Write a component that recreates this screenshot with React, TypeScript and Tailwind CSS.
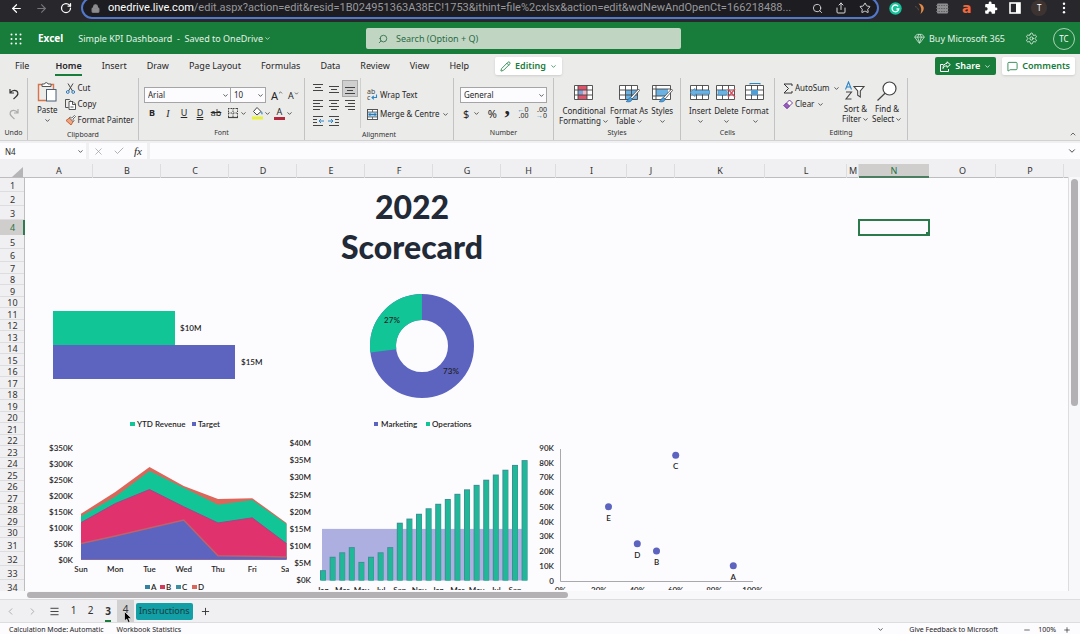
import type { ReactNode } from 'react';
import {
  ArrowLeft,
  ArrowRight,
  ChevronDown,
  ChevronLeft,
  ChevronRight,
  ChevronUp,
  Check,
  Gem,
  Lock,
  Menu,
  MessageSquare,
  Minus,
  Pencil,
  Plus,
  RotateCw,
  Search,
  Settings,
  Share,
  Star,
  X,
} from 'lucide-react';
import { MdExtension } from 'react-icons/md';

const PURPLE = '#5c64c0';
const GREEN = '#12c597';

const columns = [
  { name: 'A', width: 68 },
  { name: 'B', width: 68 },
  { name: 'C', width: 68 },
  { name: 'D', width: 68 },
  { name: 'E', width: 68 },
  { name: 'F', width: 68 },
  { name: 'G', width: 68 },
  { name: 'H', width: 55 },
  { name: 'I', width: 71 },
  { name: 'J', width: 48 },
  { name: 'K', width: 90 },
  { name: 'L', width: 82 },
  { name: 'M', width: 12 },
  { name: 'N', width: 70 },
  { name: 'O', width: 67 },
  { name: 'P', width: 68 },
];

const rows = Array.from({ length: 34 }, (_, i) => {
  const n = i + 1;
  if (n === 4) return { n, height: 15 };
  if (n === 6) return { n, height: 13 };
  if (n >= 7 && n <= 30) return { n, height: n % 2 ? 12 : 11 };
  return { n, height: 14 };
});

const menuTabs = ['File', 'Home', 'Insert', 'Draw', 'Page Layout', 'Formulas', 'Data', 'Review', 'View', 'Help'];

const menuTabStyle = (tab: string) => {
  if (tab === 'Home') return 'border-b-2 border-[#187c3b] pt-[2px] font-semibold';
  if (tab === 'File') return 'pr-[6px]';
  return '';
};

function Chev({ className = '' }: { className?: string }) {
  return <ChevronDown size={7} strokeWidth={2.5} className={`shrink-0 ${className}`} />;
}

/* ---------- browser bar ---------- */

function BrowserBar() {
  return (
    <div className="h-[22px] shrink-0 overflow-hidden bg-[#28282c] text-[#d8d8da]">
      <div className="-mt-[3px] flex h-[22px] items-center">
        <div className="flex w-[81px] shrink-0 items-center gap-3 pl-[10px]">
          <button aria-label="Back"><ArrowLeft size={13} strokeWidth={2.2} className="text-white" /></button>
          <button aria-label="Forward"><ArrowRight size={13} strokeWidth={2} className="text-[#77777b]" /></button>
          <button aria-label="Reload"><RotateCw size={12} strokeWidth={2.5} className="text-white" /></button>
        </div>
        <div className="flex h-[22px] min-w-0 flex-1 items-center rounded-full border-2 border-[#5278cc] bg-[#1d1d21] pr-[6px] pl-2">
          <Lock size={9} strokeWidth={3} className="shrink-0 fill-[#8d8d91] text-[#8d8d91]" />
          <span className="ml-2 min-w-0 flex-1 truncate font-['Roboto','Liberation_Sans',sans-serif] text-[11px] text-[#98989c]">
            <span className="text-white">onedrive.live.com</span>
            /edit.aspx?action=edit&amp;resid=1B024951363A38EC!1753&amp;ithint=file%2cxlsx&amp;action=edit&amp;wdNewAndOpenCt=166218488...
          </span>
          <div className="flex shrink-0 items-center gap-3 pl-2">
            <button aria-label="Zoom"><Search size={11} /></button>
            <button aria-label="Share page"><Share size={12} /></button>
            <button aria-label="Bookmark"><Star size={12} /></button>
          </div>
        </div>
        <div className="flex w-[201px] shrink-0 items-center justify-between pr-[10px] pl-[10px]">
          <svg width="13" height="13" viewBox="0 0 13 13">
            <circle cx="6.5" cy="6.5" r="6.2" fill="#15c39a" />
            <path d="M9.2 4.4A3.4 3.4 0 1 0 9.8 7H7.4" fill="none" stroke="#fff" strokeWidth="1.3" />
          </svg>
          <svg width="13" height="13" viewBox="0 0 13 13">
            <path d="M5.500 1.500c5.500.6 7.500 6 2 10.500C9 8 8.500 4.500 5.500 1.500Z" fill="#e58a45" />
            <path d="M2 4.500c2 .5 3.200 1.800 3.600 3.800" fill="none" stroke="#5a4a42" />
          </svg>
          <svg width="13" height="13" viewBox="0 0 13 13">
            <rect x="1" y="1.500" width="11" height="10" rx="1" fill="#8f8f92" />
            <path d="M0 3.500h13M0 6.500h13M0 9.500h13" stroke="#636367" strokeDasharray="1.500 1" />
          </svg>
          <span className="flex h-[13px] w-[13px] items-center justify-center font-['DejaVu_Sans',sans-serif] text-[14px] leading-none font-bold text-[#f2683c]">a</span>
          <MdExtension size={14} className="text-white" />
          <svg width="12" height="12" viewBox="0 0 12 12">
            <rect x="1" y="1" width="10" height="10" fill="none" stroke="#fff" strokeWidth="1.600" />
            <path d="M7 1h4v10H7z" fill="#fff" />
          </svg>
          <span className="flex h-4 w-4 items-center justify-center rounded-full bg-[#3d3432] text-[8px] text-white">T</span>
          <svg width="12" height="12" viewBox="0 0 12 12" fill="#fff">
            <circle cx="6" cy="1.800" r="1.200" />
            <circle cx="6" cy="6" r="1.200" />
            <circle cx="6" cy="10.200" r="1.200" />
          </svg>
        </div>
      </div>
    </div>
  );
}

/* ---------- green title bar ---------- */

function TitleBar() {
  return (
    <header className="grid h-8 shrink-0 grid-cols-[366fr_315fr_399fr] items-center bg-[#187c3b] pt-px text-[9px] text-[#e4f3e8]">
      <div className="flex items-center pl-[10px] whitespace-nowrap">
        <button aria-label="App launcher">
          <svg width="12" height="12" viewBox="0 0 12 12" fill="#fff">
            {[1.5, 6, 10.5].map((y) =>
              [1.5, 6, 10.5].map((x) => <circle key={`${x}-${y}`} cx={x} cy={y} r="1" />)
            )}
          </svg>
        </button>
        <span className="ml-4 text-[10px] font-bold text-white">Excel</span>
        <button className="ml-[15px] flex items-center">
          Simple KPI Dashboard&nbsp; -&nbsp; Saved to OneDrive
          <Chev className="ml-px" />
        </button>
      </div>
      <label className="flex h-[21px] items-center gap-2 rounded-[2px] bg-[#c0d6c3] px-3 text-[#2a6b45]">
        <Search size={10} className="-scale-x-100" />
        <input
          aria-label="Search"
          placeholder="Search (Option + Q)"
          className="min-w-0 flex-1 bg-transparent outline-none placeholder:text-[#2a6b45]"
        />
      </label>
      <div className="flex items-center justify-end pr-[5px]">
        <button className="flex items-center gap-1">
          <Gem size={11} strokeWidth={1.600} />
          Buy Microsoft 365
        </button>
        <button aria-label="Settings" className="ml-5"><Settings size={13} strokeWidth={1.600} /></button>
        <button className="ml-[15px] flex h-[22px] w-[22px] items-center justify-center rounded-full border border-[#a9d3b5] text-[8px] text-white">TC</button>
      </div>
    </header>
  );
}

function MenuRow() {
  return (
    <div className="flex h-6 shrink-0 items-center bg-[#ebebea] pr-[5px] pl-[15px] text-[9px]">
      <nav className="flex items-center gap-5">
        {menuTabs.map((tab) => (
          <button key={tab} className={`leading-[16px] whitespace-nowrap ${menuTabStyle(tab)}`}>
            {tab}
          </button>
        ))}
      </nav>
      <button className="ml-[26px] flex h-[18px] items-center gap-1 rounded-[2px] bg-white px-[5px] font-semibold text-[#187c3b] shadow-sm">
        <Pencil size={11} strokeWidth={1.800} />
        Editing
        <Chev />
      </button>
      <div className="ml-auto flex gap-[6px] font-semibold">
        <button className="flex h-[18px] items-center gap-1 rounded-[2px] bg-[#187c3b] px-[5px] text-white">
          <svg width="11" height="11" viewBox="0 0 11 11" fill="none" stroke="currentColor">
            <path d="M3.500 3.500h-3v7h8V8" />
            <path d="M7 .8 10.300 3.600 7 6.400V4.800C5 4.800 3.800 5.600 3 7.500 3 4.800 4.300 2.600 7 2.400Z" />
          </svg>
          Share
          <Chev />
        </button>
        <button className="flex h-[18px] items-center gap-1 rounded-[2px] bg-white px-[5px] text-[#187c3b] shadow-sm">
          <MessageSquare size={11} strokeWidth={1.800} />
          Comments
        </button>
      </div>
    </div>
  );
}

/* ---------- ribbon icons ---------- */

function PasteIcon() {
  return (
    <svg width="20" height="21" viewBox="0 0 20 21" fill="none">
      <path d="M5 3.500H1.500v16H9M14 3.500h2.500V8" stroke="#d9734a" strokeWidth="1.400" />
      <path d="M5 5.500V3h2.500a1.800 1.800 0 0 1 3.500 0H14v2.500Z" fill="#fff" stroke="#555" />
      <rect x="9.500" y="8.500" width="9.500" height="11.500" fill="#fff" stroke="#4a5e78" />
    </svg>
  );
}

function CutIcon() {
  return (
    <svg width="11" height="11" viewBox="0 0 11 11" fill="none">
      <path d="m3 .5 4.500 7.500M8 .5 3.500 8" stroke="#444" />
      <circle cx="2.800" cy="9" r="1.400" stroke="#2e7ab8" />
      <circle cx="8.200" cy="9" r="1.400" stroke="#2e7ab8" />
    </svg>
  );
}

function CopyIcon() {
  return (
    <svg width="11" height="11" viewBox="0 0 11 11" fill="none" stroke="#444" strokeWidth=".9">
      <path d="M3.500 8.500H.5v-8h4l1 1" />
      <path d="M4 2.500h4l2.500 2.500v5.500H4ZM7.500 2.500v3h3" fill="#fff" />
      <path d="M5.500 8h3" />
    </svg>
  );
}

function PainterIcon() {
  return (
    <svg width="11" height="11" viewBox="0 0 11 11" fill="none">
      <path d="M5 2.500 8.500 6 6 10 1 5.500Z" fill="#f3a37d" stroke="#c05a2c" strokeWidth=".9" />
      <path d="M4.500 3 8 6.500 9 5.500 7.800 4.200 10.500 1.500 9.500.5 6.800 3 5.500 2Z" fill="#fff" stroke="#444" strokeWidth=".8" />
    </svg>
  );
}

// three horizontal strokes; each entry is [x1, x2] on a 12px wide icon
function Lines({ spans, top = 2 }: { spans: number[][]; top?: number }) {
  return (
    <svg width="12" height="12" viewBox="0 0 12 12" stroke="#444" strokeWidth="1">
      {spans.map(([a, b], i) => (
        <path key={i} d={`M${a} ${top + i * 3 - 0.5}H${b}`} />
      ))}
    </svg>
  );
}

function IndentIcon({ right = false }: { right?: boolean }) {
  return (
    <svg width="12" height="12" viewBox="0 0 12 12" fill="none" stroke="#444">
      <path d={right ? 'M1 1.500h10M7 4.500h4M7 7.500h4M1 10.500h10' : 'M1 1.500h10M1 4.500h4M1 7.500h4M1 10.500h10'} />
      <path d={right ? 'M0 6h5M3 4l2 2-2 2' : 'M12 6H7M9 4 7 6l2 2'} stroke="#2b86c8" />
    </svg>
  );
}

function WrapIcon() {
  return (
    <svg width="11" height="12" viewBox="0 0 11 12" fill="none" className="overflow-visible">
      <text x="0" y="5" fontSize="7" fill="#444">ab</text>
      <text x="0" y="11" fontSize="7" fill="#444">c</text>
      <path d="M9.500 5.500v3H5M6.800 6.800 5 8.500l1.800 1.800" stroke="#2b86c8" strokeWidth="1.100" />
    </svg>
  );
}

function MergeIcon() {
  return (
    <svg width="11" height="11" viewBox="0 0 11 11" fill="none">
      <rect x=".5" y=".5" width="10" height="10" fill="#fff" stroke="#555" />
      <rect x="1" y="3" width="9" height="5" fill="#a6d3ee" />
      <path d="M.5 3h10M.5 8h10M5.500.5V3M5.500 8v2.500" stroke="#555" strokeWidth=".8" />
      <path d="M2 5.500h7M3.500 4 2 5.500 3.500 7M7.500 4 9 5.500 7.500 7" stroke="#1f6fae" strokeWidth=".9" />
    </svg>
  );
}

function SheetGrid({ children }: { children: ReactNode }) {
  return (
    <svg width="22" height="20" viewBox="0 0 22 20" fill="none">
      <path d="M1.500 2.500h18v14h-18Z" fill="#fff" />
      {children}
    </svg>
  );
}

const gridStroke = 'M1.500 2.500h18v14h-18ZM1.500 7h18M1.500 12h18M7.500 2.500v14M13.500 2.500v14';

function ConditionalIcon() {
  return (
    <SheetGrid>
      <path d="M5 3h9v4H5zM5 12h9v4H5z" fill="#e0526a" />
      <path d="M5 7h5v5H5z" fill="#7fa4d8" />
      <path d="M10 7h4v5h-4z" fill="#f4b5c0" />
      <path d="M1.500 2.500h18v14h-18ZM1.500 7h18M1.500 12h18M5 2.500v14M14 2.500v14" stroke="#444" strokeWidth=".9" />
    </SheetGrid>
  );
}

function BrushStroke() {
  return (
    <>
      <path d="m20.500 6-8 8.500 1.500 1.500 7.500-8.500Z" fill="#fff" stroke="#444" strokeWidth=".8" />
      <path d="M12.500 14.300c-2 .2-2.200 3.700-4.500 4.200 3 1 6 .2 6.200-2.600Z" fill="#4f9ed6" stroke="#2c6fa8" strokeWidth=".7" />
    </>
  );
}

function FormatTableIcon() {
  return (
    <SheetGrid>
      <path d="M7.500 7h12v9.500h-12z" fill="#6bb2e2" />
      <path d={gridStroke} stroke="#444" strokeWidth=".9" />
      <BrushStroke />
    </SheetGrid>
  );
}

function StylesIcon() {
  return (
    <SheetGrid>
      <path d="M5 6h12v7H5z" fill="#6bb2e2" />
      <path d="M1.500 2.500h18v14h-18ZM1.500 6h18M5 2.500v14M1.500 13h15" stroke="#444" strokeWidth=".9" />
      <BrushStroke />
    </SheetGrid>
  );
}

function InsertCellsIcon() {
  return (
    <SheetGrid>
      <path d={gridStroke} stroke="#444" strokeWidth=".9" />
      <path d="M6 5.500 1 9.500l5 4v-2.300h14.500V7.500H6Z" fill="#6bb2e2" stroke="#3a88bd" strokeWidth=".7" />
    </SheetGrid>
  );
}

function DeleteCellsIcon() {
  return (
    <SheetGrid>
      <path d={gridStroke} stroke="#444" strokeWidth=".9" />
      <path d="M3 7.500h8l2 2-2 2.500H3Z" fill="#6bb2e2" stroke="#3a88bd" strokeWidth=".7" />
      <path d="m13 6 7 8M20 6l-7 8" stroke="#d9485a" strokeWidth="1.200" />
    </SheetGrid>
  );
}

function FormatCellsIcon() {
  return (
    <SheetGrid>
      <path d={gridStroke} stroke="#444" strokeWidth=".9" />
      <path d="M7 7h7v5H7z" fill="#4f9ed6" />
      <path d="M6 .5h10M6 0v1.500M16 0v1.500" stroke="#2b86c8" />
    </SheetGrid>
  );
}

function SortIcon() {
  return (
    <svg width="22" height="20" viewBox="0 0 22 20" fill="none">
      <path d="M1.500 8.500 4.500 1l3 7.500M2.600 6h3.800" stroke="#2b86c8" strokeWidth="1.100" />
      <path d="M2 11h5.500L2 18h5.500" stroke="#444" strokeWidth="1.100" />
      <path d="M10 5.500h10l-3.700 4.500v6l-2.600-1.800V10Z" fill="#fff" stroke="#444" strokeWidth="1.100" />
    </svg>
  );
}

function FindIcon() {
  return (
    <svg width="22" height="20" viewBox="0 0 22 20" fill="none" stroke="#444" strokeWidth="1.200">
      <circle cx="13.500" cy="7.500" r="6.500" fill="#fff" />
      <path d="M9 12.300 1.500 19.500" />
    </svg>
  );
}

function FillIcon() {
  return (
    <svg width="12" height="14" viewBox="0 0 12 14" fill="none">
      <path d="M5 1.500 9 5.500 5 9 1.500 5.500Z" fill="#fff" stroke="#444" />
      <path d="M9.500 5c1.500 1.500 1.200 3.500.5 3.500S9 7 9.500 5Z" fill="#2b86c8" />
      <path d="M0 10.500h11v3H0z" fill="#e6f23a" />
    </svg>
  );
}

/* ---------- ribbon ---------- */

function Group({ label, className, children }: { label: string; className: string; children: ReactNode }) {
  return (
    <section className={`flex shrink-0 flex-col border-r border-[#c4c3c3] ${className}`}>
      <div className="flex h-[50px]">{children}</div>
      <div className="text-center text-[7px] leading-[14px] text-[#333]">{label}</div>
    </section>
  );
}

function BigButton({ icon, lines, className = '' }: { icon: ReactNode; lines: string[]; className?: string }) {
  return (
    <button className={`flex flex-col items-center text-[8px] leading-[10px] whitespace-nowrap ${className}`}>
      <span className="mb-[3px]">{icon}</span>
      <span>{lines[0]}</span>
      <span className="flex h-[10px] items-center">
        {lines[1]}
        <Chev className={lines[1] ? 'ml-px' : ''} />
      </span>
    </button>
  );
}

function Picker({ label, value, className }: { label: string; value: string; className: string }) {
  return (
    <div className={`relative ${className}`}>
      <select aria-label={label} className="h-4 w-full appearance-none border border-[#a5a4a6] bg-[#fcfbfe] pl-[3px] text-[8px] leading-none outline-none">
        <option>{value}</option>
      </select>
      <Chev className="pointer-events-none absolute top-[5px] right-[2px]" />
    </div>
  );
}

function Ribbon() {
  return (
    <div className="flex h-[63px] shrink-0 overflow-hidden border-b border-[#d3d2d3] bg-[#ebebea] text-[8px] text-[#262626]">
      <Group label="Undo" className="w-7">
        <div className="flex flex-1 flex-col items-center gap-2 pt-[10px]">
          <button aria-label="Undo">
            <svg width="12" height="12" viewBox="0 0 12 12" fill="none" stroke="#333" strokeWidth="1.200">
              <path d="M2 1v4h4M2.200 4.800C4.500 1.500 9 1.800 9.800 4.800c.6 2.200-1 3.500-4.300 6.200" />
            </svg>
          </button>
          <button aria-label="Redo">
            <svg width="12" height="12" viewBox="0 0 12 12" fill="none" stroke="#aaa" strokeWidth="1.200">
              <path d="M10 1v4H6M9.800 4.800C7.500 1.500 3 1.800 2.200 4.800c-.6 2.200 1 3.500 4.300 6.200" />
            </svg>
          </button>
        </div>
      </Group>

      <Group label="Clipboard" className="w-[111px]">
        <BigButton icon={<PasteIcon />} lines={['Paste']} className="ml-[9px] pt-[3px]" />
        <div className="ml-[7px] flex flex-col pt-[2px] leading-[16px]">
          <button className="flex items-center gap-[2px]"><CutIcon />Cut</button>
          <button className="flex items-center gap-[2px]"><CopyIcon />Copy</button>
          <button className="flex items-center gap-[2px] whitespace-nowrap"><PainterIcon />Format Painter</button>
        </div>
      </Group>

      <Group label="Font" className="w-[166px]">
        <div className="flex flex-1 flex-col pt-[9px] pl-[5px]">
          <div className="flex items-center">
            <Picker label="Font" value="Arial" className="w-[87px]" />
            <Picker label="Font size" value="10" className="-ml-px w-9" />
            <button aria-label="Increase font size" className="ml-[5px] flex items-start text-[11px] leading-none">
              A<ChevronUp size={5} strokeWidth={3} />
            </button>
            <button aria-label="Decrease font size" className="ml-[5px] flex items-start text-[9px] leading-none">
              A<ChevronDown size={5} strokeWidth={3} />
            </button>
          </div>
          <div className="mt-[3px] flex h-[14px] items-center text-[9px]">
            <button aria-label="Bold" className="w-4 font-bold">B</button>
            <button aria-label="Italic" className="w-4 font-['Liberation_Serif',serif] text-[10px] italic">I</button>
            <button aria-label="Underline" className="w-4 underline">U</button>
            <button aria-label="Double underline" className="w-4 underline decoration-double">D</button>
            <button aria-label="Strikethrough" className="w-4 line-through">ab</button>
            <button aria-label="Borders" className="ml-[3px] flex items-center">
              <svg width="12" height="12" viewBox="0 0 12 12" fill="none" stroke="#444">
                <path d="M1 1.500h10M1.500 1v10M10.500 1v10M6 1v10M1 6h10" strokeDasharray="1.500 1" />
                <path d="M1 10.500h10" strokeWidth="1.200" />
              </svg>
              <Chev className="ml-px" />
            </button>
            <button aria-label="Fill colour" className="ml-[5px] flex items-center">
              <FillIcon />
              <Chev />
            </button>
            <button aria-label="Font colour" className="ml-[3px] flex items-center">
              <span className="flex h-[13px] w-[11px] items-center justify-center border-b-[3px] border-[#b3283c] leading-none">A</span>
              <Chev className="ml-px" />
            </button>
          </div>
        </div>
      </Group>

      <Group label="Alignment" className="w-[149px]">
        <div className="ml-[5px] grid grid-cols-3 content-start border-r border-[#d0cfd0] pt-[2px] pr-[2px]">
          <span className="flex h-[17px] w-4 items-center justify-center"><Lines spans={[[1, 11], [3, 9], [1, 11]]} /></span>
          <span className="flex h-[17px] w-4 items-center justify-center"><Lines spans={[[1, 11], [3, 9], [1, 11]]} top={4} /></span>
          <span className="flex h-[17px] w-4 items-center justify-center border border-[#a9a8a9] bg-[#d0cfcf]"><Lines spans={[[1, 11], [3, 9], [1, 11]]} top={5} /></span>
          <span className="flex h-4 w-4 items-center justify-center"><Lines spans={[[1, 11], [1, 8], [1, 11], [1, 8]]} /></span>
          <span className="flex h-4 w-4 items-center justify-center"><Lines spans={[[1, 11], [3, 9], [1, 11], [3, 9]]} /></span>
          <span className="flex h-4 w-4 items-center justify-center"><Lines spans={[[1, 11], [4, 11], [1, 11], [4, 11]]} /></span>
          <span className="flex h-4 w-4 items-center justify-center"><IndentIcon /></span>
          <span className="flex h-4 w-4 items-center justify-center"><IndentIcon right /></span>
        </div>
        <div className="ml-[6px] flex flex-col gap-[7px] pt-[11px]">
          <button className="flex items-center gap-[2px] leading-[12px]"><WrapIcon />Wrap Text</button>
          <button className="flex items-center gap-[2px] leading-[12px] whitespace-nowrap"><MergeIcon />Merge &amp; Centre<Chev /></button>
        </div>
      </Group>

      <Group label="Number" className="w-[100px]">
        <div className="flex flex-1 flex-col px-[6px] pt-[9px]">
          <Picker label="Number format" value="General" className="w-full" />
          <div className="mt-[3px] flex h-[14px] items-center justify-between text-[11px] leading-none">
            <button aria-label="Currency" className="flex items-center gap-1 pl-[3px]">$<Chev /></button>
            <button aria-label="Percent">%</button>
            <button aria-label="Comma style" className="pb-3 font-['Liberation_Serif',serif] text-[22px] leading-[2px] font-bold">,</button>
            <button aria-label="Increase decimal" className="flex flex-col items-end text-[7px] leading-[6px]"><span><span className="text-[#2b86c8]">←</span>0</span><span>.00</span></button>
            <button aria-label="Decrease decimal" className="flex flex-col items-end text-[7px] leading-[6px]"><span>.00</span><span><span className="text-[#2b86c8]">→</span>0</span></button>
          </div>
        </div>
      </Group>

      <Group label="Styles" className="w-[127px]">
        <BigButton icon={<ConditionalIcon />} lines={['Conditional', 'Formatting']} className="ml-[5px] pt-[5px]" />
        <BigButton icon={<FormatTableIcon />} lines={['Format As', 'Table']} className="ml-px pt-[5px]" />
        <BigButton icon={<StylesIcon />} lines={['Styles']} className="ml-[3px] pt-[5px]" />
      </Group>

      <Group label="Cells" className="w-[94px]">
        <BigButton icon={<InsertCellsIcon />} lines={['Insert']} className="ml-2 pt-[5px]" />
        <BigButton icon={<DeleteCellsIcon />} lines={['Delete']} className="ml-[3px] pt-[5px]" />
        <BigButton icon={<FormatCellsIcon />} lines={['Format']} className="ml-[3px] pt-[5px]" />
      </Group>

      <Group label="Editing" className="w-[133px]">
        <div className="ml-2 flex w-[58px] shrink-0 flex-col pt-[2px] leading-[16px]">
          <button className="flex items-center gap-[2px]">
            <svg width="10" height="11" viewBox="0 0 10 11" fill="none" stroke="#333"><path d="M9 3V1H1l4.500 4.500L1 10h8V8" /></svg>
            AutoSum<Chev className="ml-px" />
          </button>
          <button className="flex items-center gap-[2px]">
            <svg width="10" height="11" viewBox="0 0 10 11" fill="none" stroke="#7a3fa0">
              <path d="M6.500 1 9.500 4 4 9.500 1 6.500Z" fill="#fff" />
              <path d="M3.500 4 6.500 7 4 9.500 1 6.500Z" fill="#9a5cc0" />
            </svg>
            Clear<Chev className="ml-px" />
          </button>
        </div>
        <BigButton icon={<SortIcon />} lines={['Sort &', 'Filter']} className="ml-px pt-[3px]" />
        <BigButton icon={<FindIcon />} lines={['Find &', 'Select']} className="ml-[3px] pt-[3px]" />
      </Group>

      <button aria-label="Collapse ribbon" className="mt-auto mr-[3px] mb-[2px] ml-auto"><ChevronUp size={8} /></button>
    </div>
  );
}

function FormulaBar() {
  return (
    <div className="flex h-[18px] shrink-0 items-stretch gap-[3px] bg-[#f0eff1] pt-[2px] text-[8px]">
      <div className="relative w-[86px] bg-[#fcfbfe]">
        <input aria-label="Name box" defaultValue="N4" className="h-full w-full bg-transparent pl-[5px] outline-none" />
        <Chev className="pointer-events-none absolute top-[5px] right-[2px]" />
      </div>
      <div className="flex w-[58px] items-center justify-between bg-[#fcfbfe] px-1">
        <button aria-label="Cancel"><X size={11} strokeWidth={1.500} className="text-[#999]" /></button>
        <button aria-label="Enter"><Check size={12} strokeWidth={1.500} className="text-[#999]" /></button>
        <button aria-label="Insert function" className="pr-px font-['Liberation_Serif',serif] text-[11px] italic">fx</button>
      </div>
      <div className="flex flex-1 items-center bg-[#fcfbfe] pr-[3px]">
        <input aria-label="Formula" className="h-full min-w-0 flex-1 bg-transparent outline-none" />
        <ChevronDown size={10} />
      </div>
    </div>
  );
}

/* ---------- charts ---------- */

function RevenueChart() {
  return (
    <svg width="240" height="145" className="absolute top-[110px] left-[15px]">
      <rect x="13" y="23" width="122" height="34" fill={GREEN} />
      <rect x="13" y="57" width="182" height="34" fill={PURPLE} />
      <text x="140" y="43">$10M</text>
      <text x="201" y="77">$15M</text>
      <rect x="90" y="134" width="5" height="4" fill={GREEN} />
      <text x="97" y="139">YTD Revenue</text>
      <rect x="152" y="134" width="4" height="4" fill={PURPLE} />
      <text x="158" y="139">Target</text>
    </svg>
  );
}

function DepartmentChart() {
  return (
    <svg width="130" height="145" className="absolute top-[110px] left-[332px]">
      <circle cx="65" cy="58" r="39" fill="none" stroke={PURPLE} strokeWidth="26" />
      <circle
        cx="65"
        cy="58"
        r="39"
        fill="none"
        stroke={GREEN}
        strokeWidth="26"
        pathLength="100"
        strokeDasharray="27 73"
        transform="rotate(172.8 65 58)"
      />
      <text x="35" y="35" textAnchor="middle">27%</text>
      <text x="94" y="86" textAnchor="middle">73%</text>
      <rect x="17" y="134" width="4" height="4" fill={PURPLE} />
      <text x="24" y="139">Marketing</text>
      <rect x="69" y="134" width="4" height="4" fill={GREEN} />
      <text x="75" y="139">Operations</text>
    </svg>
  );
}

const days = ['Sun', 'Mon', 'Tue', 'Wed', 'Thu', 'Fri', 'Sat'];
const areaSeries = [
  { name: 'D', fill: '#dd665a', top: [144, 212, 291, 231, 190, 193, 115] },
  { name: 'C', fill: '#12c597', top: [136, 197, 278, 226, 172, 187, 112] },
  { name: 'B', fill: '#e0326d', top: [116, 176, 220, 166, 115, 131, 50] },
  { name: 'A', fill: '#5c64c0', top: [50, 74, 99, 124, 12, 10, 8] },
];
const areaLegend = [
  { name: 'A', x: 105, fill: '#3283a3' },
  { name: 'B', x: 120, fill: '#d63a5b' },
  { name: 'C', x: 136, fill: '#3b8fa3' },
  { name: 'D', x: 152, fill: '#dd665a' },
];

function WeeklyChart() {
  const px = (i: number) => 41 + i * 34.25;
  const py = (v: number) => 119.5 - (v * 15.9) / 50;
  const line = (top: number[]) => top.map((v, i) => `${px(i)} ${py(v)}`).join('L');

  return (
    <svg width="249" height="151" className="absolute top-[262px] left-[15px]">
      {[350, 300, 250, 200, 150, 100, 50, 0].map((v) => (
        <text key={v} x="33" y={py(v) + 3} textAnchor="end">${v}K</text>
      ))}
      {areaSeries.map((s) => (
        <path key={s.name} d={`M${line(s.top)}V119.5H41Z`} fill={s.fill} />
      ))}
      <path d={`M${line(areaSeries[3].top)}`} fill="none" stroke="#c0626c" strokeWidth="1.500" />
      <path d={`M${line(areaSeries[2].top)}`} fill="none" stroke="#a0478a" />
      {days.map((d, i) => (
        <text key={d} x={px(i)} y="132" textAnchor="middle">{d}</text>
      ))}
      {areaLegend.map((l) => (
        <g key={l.name}>
          <rect x={l.x} y="145" width="5" height="4" fill={l.fill} />
          <text x={l.x + 6} y="150">{l.name}</text>
        </g>
      ))}
    </svg>
  );
}

const monthly = [3, 6.9, 8.2, 9.7, 5.4, 6.9, 8.2, 9.7, 16.8, 18, 19.4, 21, 22.3, 23.7, 25.2, 26.5, 27.8, 29.3, 30.8, 32.2, 33.6, 35];
const monthNames = ['Jan', 'Mar', 'May', 'Jul', 'Sep', 'Nov', 'Jan', 'Mar', 'May', 'Jul', 'Sep'];

function MonthlyChart() {
  const px = (i: number) => 35 + i * 9.6;
  const py = (v: number) => 144.5 - (v * 17.2) / 5;

  return (
    <svg width="245" height="154" className="absolute top-[258px] left-[263px]">
      {[40, 35, 30, 25, 20, 15, 10, 5].map((v) => (
        <text key={v} x="23" y={py(v) + 3} textAnchor="end">${v}M</text>
      ))}
      <text x="23" y="147" textAnchor="end">$0K</text>
      <rect x="34" y={py(15)} width="201" height={144.5 - py(15)} fill={PURPLE} opacity=".5" />
      {monthly.map((v, i) => (
        <g key={i}>
          <rect x={px(i) - 3} y={py(v)} width="6" height={144.5 - py(v)} fill="#3f8f98" />
          <rect x={px(i) - 2} y={py(v) + 1} width="4.500" height={143.5 - py(v)} fill="#21b898" />
        </g>
      ))}
      {monthNames.map((m, i) => (
        <text key={i} x={px(i * 2)} y="157" textAnchor="middle">{m}</text>
      ))}
    </svg>
  );
}

const points = [
  { name: 'A', x: 90, y: 10 },
  { name: 'B', x: 50, y: 20 },
  { name: 'C', x: 60, y: 85 },
  { name: 'D', x: 40, y: 25 },
  { name: 'E', x: 25, y: 50 },
];

function ScatterChart() {
  const px = (v: number) => 30.5 + v * 1.92;
  const py = (v: number) => 142.5 - v * 1.473;

  return (
    <svg width="245" height="152" className="absolute top-[260px] left-[505px]">
      {[90, 80, 70, 60, 50, 40, 30, 20, 10, 0].map((v) => (
        <text key={v} x="24" y={py(v) + 3} textAnchor="end">{v ? `${v}K` : '0'}</text>
      ))}
      <path d="M30.500 11V143.500H223" fill="none" stroke="#a9a8ac" />
      {points.map((p) => (
        <g key={p.name}>
          <circle cx={px(p.x)} cy={py(p.y)} r="3.500" fill={PURPLE} />
          <text x={px(p.x)} y={py(p.y) + 14} textAnchor="middle">{p.name}</text>
        </g>
      ))}
      {[0, 20, 40, 60, 80, 100].map((v) => (
        <text key={v} x={px(v)} y="155" textAnchor="middle">{v}%</text>
      ))}
    </svg>
  );
}

/* ---------- sheet ---------- */

function Sheet() {
  return (
    <div className="flex min-h-0 flex-1 bg-[#f0eff1] pt-[5px]">
      <div className="relative min-w-0 flex-1 overflow-hidden">
        <table className="w-full min-w-[1064px] table-fixed border-collapse text-[9px] leading-[11px] text-[#333]">
          <colgroup>
            <col style={{ width: 25 }} />
            {columns.map((c) => (
              <col key={c.name} style={{ width: c.width }} />
            ))}
            <col />
          </colgroup>
          <thead>
            <tr className="h-[14px]">
              <th aria-label="Select all" className="p-0 align-bottom shadow-[inset_0_-1px_0_#bdbcbe]">
                <svg width="24" height="11" viewBox="0 0 24 11"><path d="M23 0v10H12Z" fill="#b5b4b6" /></svg>
              </th>
              {columns.map((c) => (
                <th
                  key={c.name}
                  className={
                    c.name === 'N'
                      ? 'bg-[#cfcecc] p-0 pb-[2px] font-normal text-[#1e7145] shadow-[inset_0_-2px_0_#4b7d60]'
                      : 'p-0 pb-[2px] font-normal shadow-[inset_-1px_0_0_#dddcdf,inset_0_-1px_0_#bdbcbe]'
                  }
                >
                  {c.name}
                </th>
              ))}
              <th className="p-0 shadow-[inset_0_-1px_0_#bdbcbe]" />
            </tr>
          </thead>
          <tbody className="bg-[#fcfbfe]">
            {rows.map((r) => (
              <tr key={r.n} style={{ height: r.height }}>
                <th
                  className={
                    r.n === 4
                      ? 'bg-[#cfcecc] p-0 font-normal text-[#1e7145] shadow-[inset_-2px_0_0_#2f7a50]'
                      : 'bg-[#f0eff1] p-0 font-normal shadow-[inset_-1px_0_0_#bdbcbe,inset_0_-1px_0_#dddcdf]'
                  }
                >
                  {r.n}
                </th>
                {columns.map((c) =>
                  c.name === 'N' && r.n === 4 ? (
                    <td key={c.name} className="relative p-0 outline-2 -outline-offset-1 outline-[#2a7a4b]">
                      <span className="absolute -right-px -bottom-px h-[4px] w-[4px] bg-[#2a7a4b]" />
                    </td>
                  ) : (
                    <td key={c.name} className="p-0" />
                  )
                )}
                <td className="p-0" />
              </tr>
            ))}
          </tbody>
        </table>

        {/* objects floating above the cells */}
        <div className="absolute top-[14px] left-[25px] font-['Lato',sans-serif] text-[8px] font-semibold [&_svg]:fill-[#1f1f24]">
          <h1 className="absolute top-[9px] left-[287px] w-[200px] text-center text-[32px] leading-[40px] font-black text-[#212a36]">
            2022 Scorecard
          </h1>
          <RevenueChart />
          <DepartmentChart />
          <WeeklyChart />
          <MonthlyChart />
          <ScatterChart />
        </div>
      </div>
      <div className="mt-[13px] w-3 border-l border-[#dddcdf] bg-[#f8f7f9] px-[2px] pt-[2px]">
        <div className="h-[55%] rounded-full bg-[#b3b1b3]" />
      </div>
    </div>
  );
}

function SheetTabs() {
  return (
    <div className="flex h-[22px] shrink-0 items-center bg-[#f0eff1] pl-[5px] text-[9px] text-[#333]">
      <button aria-label="Previous sheet"><ChevronLeft size={11} className="text-[#aaa]" /></button>
      <button aria-label="Next sheet" className="ml-[11px]"><ChevronRight size={11} className="text-[#aaa]" /></button>
      <button aria-label="All sheets" className="ml-[11px]"><Menu size={11} /></button>
      <div className="ml-[5px] flex h-full text-[10px]">
        <button className="w-[17px] pb-px">1</button>
        <button className="w-[17px] pb-px">2</button>
        <button className="flex w-[18px] flex-col items-center justify-end font-bold">
          <span className="leading-[18px]">3</span>
          <span className="h-[2px] w-[6px] bg-[#187c3b]" />
        </button>
        <button className="relative w-[17px] bg-[#d2d1d2] pb-1">
          4
          <svg width="9" height="12" viewBox="0 0 9 12" className="absolute top-[11px] left-[7px]">
            <path d="M.5.5v9.500l2.200-2 1.500 3.500 1.800-.8-1.500-3.300h3Z" fill="#000" stroke="#fff" strokeWidth=".6" />
          </svg>
        </button>
      </div>
      <button className="ml-[2px] h-[17px] rounded-[2px] bg-[#129fa6] px-[3px] text-[#143c40]">Instructions</button>
      <button aria-label="New sheet" className="ml-[7px]"><Plus size={11} /></button>
    </div>
  );
}

function StatusBar() {
  return (
    <footer className="flex h-3 shrink-0 items-start gap-[13px] overflow-hidden border-t border-[#dddcdf] bg-[#fcfbfe] px-[9px] pt-[3px] text-[7px] leading-[8px] whitespace-nowrap text-[#222]">
      <span>Calculation Mode: Automatic</span>
      <span>Workbook Statistics</span>
      <Chev className="ml-auto" />
      <a href="#feedback" className="ml-3">Give Feedback to Microsoft</a>
      <div className="ml-3 flex items-start gap-[7px]">
        <button aria-label="Zoom out"><Minus size={8} /></button>
        100%
        <button aria-label="Zoom in"><Plus size={8} /></button>
      </div>
    </footer>
  );
}

export default function App() {
  return (
    <div className="flex h-screen flex-col overflow-hidden bg-[#f0eff1] font-['Noto_Sans','Open_Sans',sans-serif] text-[#262626]">
      <BrowserBar />
      <TitleBar />
      <MenuRow />
      <Ribbon />
      <FormulaBar />
      <Sheet />
      <div className="h-[9px] shrink-0 border-b border-[#dddcdf] bg-[#f8f7f9] pt-px pl-[27px]">
        <div className="h-[6px] w-[51.4%] rounded-full bg-[#b3b1b3]" />
      </div>
      <SheetTabs />
      <StatusBar />
    </div>
  );
}
